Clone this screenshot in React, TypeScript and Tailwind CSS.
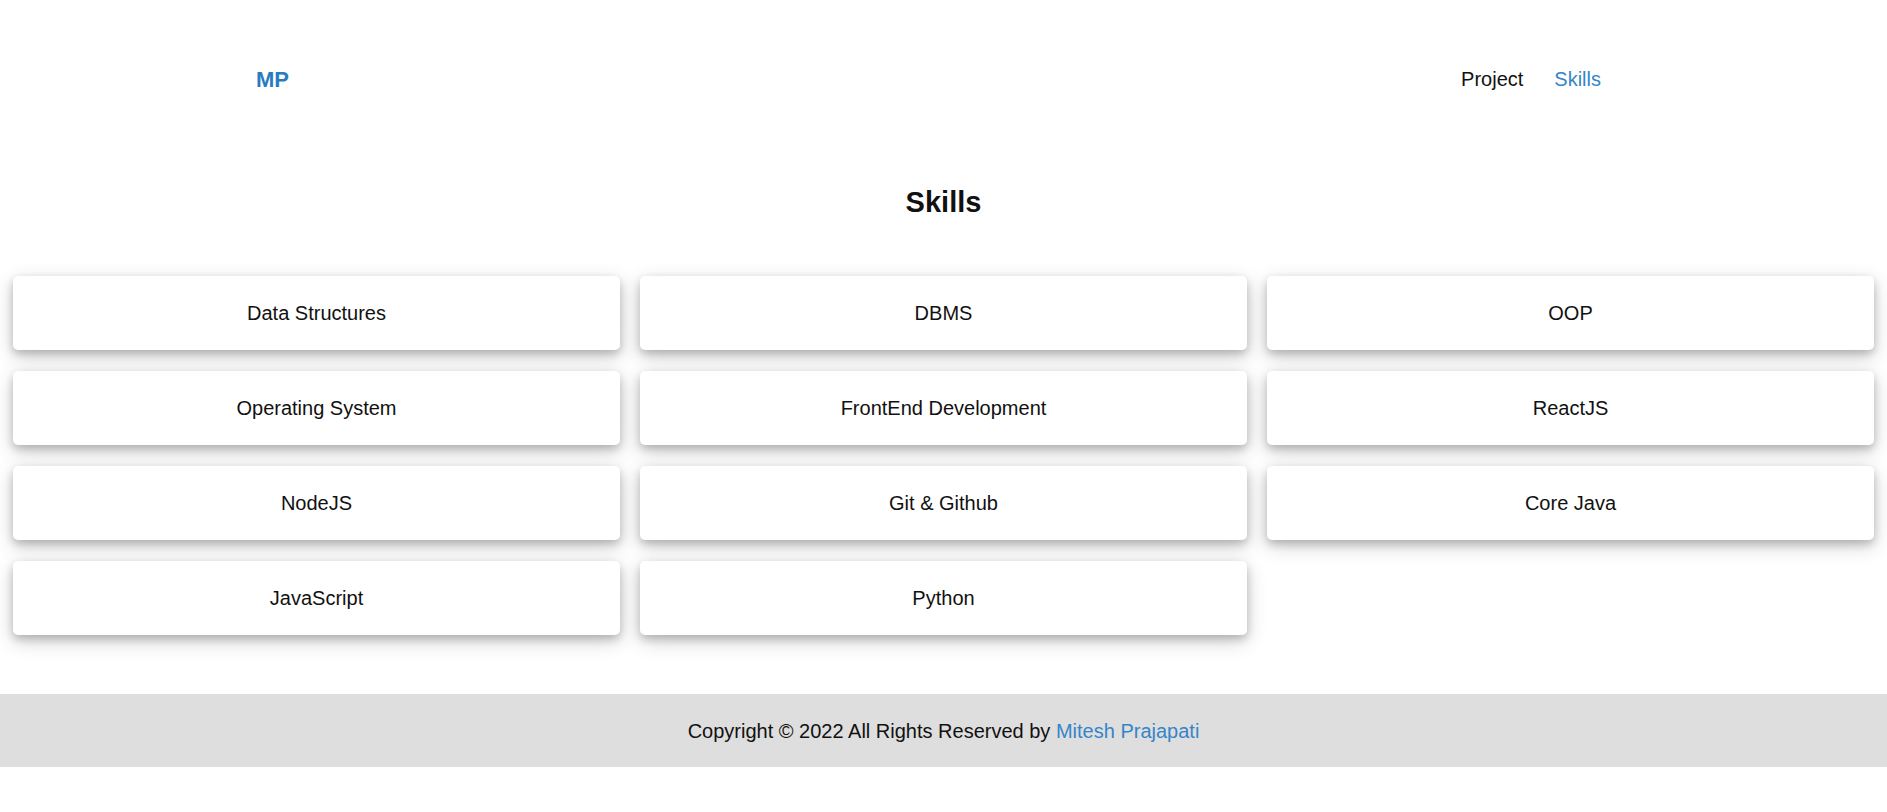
import React from 'react';

const skills = [
  'Data Structures',
  'DBMS',
  'OOP',
  'Operating System',
  'FrontEnd Development',
  'ReactJS',
  'NodeJS',
  'Git & Github',
  'Core Java',
  'JavaScript',
  'Python',
];

function Header() {
  return (
    <header className="flex h-[158px] items-center justify-between pl-[256px] pr-[286px]">
      <a href="#" className="text-[22px] font-bold text-[#2b7bbf]">
        MP
      </a>
      <nav className="flex items-center gap-[31px] text-[20px]">
        <a href="#" className="text-[#111]">
          Project
        </a>
        <a href="#" className="text-[#3585c8]">
          Skills
        </a>
      </nav>
    </header>
  );
}

function SkillCard({ name }: { name: string }) {
  return (
    <div className="flex h-[74px] items-center justify-center rounded-[5px] bg-white text-[20px] text-[#111] shadow-[0_4px_8px_0_rgba(0,0,0,0.2),0_6px_20px_0_rgba(0,0,0,0.19)]">
      {name}
    </div>
  );
}

export default function App() {
  return (
    <div className="min-h-[812px] bg-white font-['Liberation_Sans',Arial,sans-serif]">
      <Header />

      <section>
        <h2 className="pt-[28px] text-center text-[29px] leading-[33px] font-bold text-[#111]">Skills</h2>
        <div className="mt-[57px] grid grid-cols-3 gap-x-5 gap-y-[21px] px-[13px]">
          {skills.map((skill) => (
            <SkillCard key={skill} name={skill} />
          ))}
        </div>
      </section>

      <footer className="mt-[59px] flex h-[73px] items-center justify-center bg-[#dedede] text-[20px] text-[#111]">
        <p>
          Copyright © 2022 All Rights Reserved by{' '}
          <a href="#" className="text-[#3585c8]">
            Mitesh Prajapati
          </a>
        </p>
      </footer>
    </div>
  );
}
